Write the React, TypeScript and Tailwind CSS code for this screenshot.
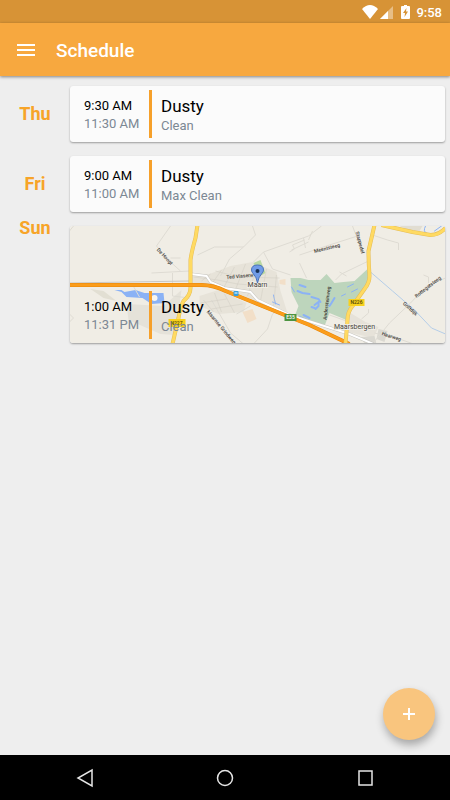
import type { ReactNode } from 'react';

type Visit = {
  day: string;
  start: string;
  end: string;
  name: string;
  task: string;
  map?: boolean;
};

const visits: Visit[] = [
  { day: 'Thu', start: '9:30 AM', end: '11:30 AM', name: 'Dusty', task: 'Clean' },
  { day: 'Fri', start: '9:00 AM', end: '11:00 AM', name: 'Dusty', task: 'Max Clean' },
  { day: 'Sun', start: '1:00 AM', end: '11:31 PM', name: 'Dusty', task: 'Clean', map: true },
];

const motorway = 'M0 59H132Q144 59 156 65L240 99L280 118';
const n227 = 'M128 -1L126 12Q122 26 121 34V62Q121 69 114 75Q111 80 109 92L103 118';
const n226 = 'M305 -1L299 25Q299 36 300 50Q300 57 295 63L283 80Q278 86 278 94L276 118';
const ringRoad = 'M312 -1L343 6L361 9Q370 9 377 1';

function StatusBar() {
  return (
    <div className="flex h-[23px] items-center justify-end bg-[#d79336] pr-2 text-white">
      <svg className="h-4 w-4" viewBox="0 0 16 16" fill="currentColor" aria-hidden="true">
        <path d="M0 5Q8 -3 16 5L8 15Z" />
      </svg>
      <svg className="ml-0.5 h-4 w-[13px]" viewBox="0 0 13 16" fill="currentColor" aria-hidden="true">
        <path d="M0 15L13 2V15Z" opacity="0.4" />
        <path d="M0 15L8 7V15Z" />
      </svg>
      <svg className="ml-2 h-4 w-[9px]" viewBox="0 0 9 16" aria-hidden="true">
        <path d="M3 1H6V2H8Q9 2 9 3V14Q9 15 8 15H1Q0 15 0 14V3Q0 2 1 2H3Z" fill="currentColor" />
        <path d="M5.500 4L2 9H4L3.500 13L7 7.500H5Z" fill="#d79336" />
      </svg>
      <span className="ml-1.5 pt-0.5 text-[13px] leading-4 font-medium">9:58</span>
    </div>
  );
}

function AppBar() {
  return (
    <header className="relative z-10 flex h-[53px] items-center bg-[#f7a83f] px-4 text-white shadow-[0_1px_3px_rgba(0,0,0,0.45)]">
      <button type="button" aria-label="Open menu" className="flex h-10 w-10 items-center">
        <svg className="h-5 w-5" viewBox="0 0 20 20" stroke="currentColor" strokeWidth="2" aria-hidden="true">
          <path d="M1 5H19M1 10H19M1 15H19" />
        </svg>
      </button>
      <h1 className="pt-0.5 text-[19px] leading-6 font-medium">Schedule</h1>
    </header>
  );
}

function AreaMap() {
  return (
    <svg
      className="absolute inset-0 h-full w-full"
      viewBox="0 0 376 117"
      preserveAspectRatio="xMidYMid slice"
      role="img"
      aria-label="Map of Maarn and Maarsbergen"
    >
      <rect width="376" height="117" fill="#f0ede5" />

      {/* Built-up and wooded areas */}
      <path d="M57 78L94 80L112 64L106 109L91 108L59 94Z" fill="#e5e2d9" />
      <path d="M21 63L34 65L47 75L34 72Z" fill="#e2dfd3" />
      <path d="M122 49L140 48L161 40L183 36L207 46L211 65L218 87L190 77L160 64L142 59H120Z" fill="#e7e3d9" />
      <path d="M130 70L149 64L177 77L174 86L149 88L130 80Z" fill="#e7e3d9" />
      <path d="M184 37L191 34L196 47L189 51Z" fill="#b9d8a1" />
      <path d="M173 86L183 83L187 93L178 97Z" fill="#f2dfc8" />
      <path d="M210 54L216 53V59L210 58Z" fill="#f2dfc8" />
      <path d="M281 87L296 96L309 101L304 112L278 106Z" fill="#e6e2d9" />
      <path d="M292 111L305 110L307 118H295ZM309 103L318 105L315 116L307 113Z" fill="#dad8d1" />
      <path d="M330 0H353L350 5L339 4Z" fill="#e1ddd2" />
      <path d="M221 52L231 52L239 54L251 54L257 48L265 57L274 56L285 55L298 43L300 57L280 85L277 94L260 87L255 100L230 91L226 88L229 80L222 66Z" fill="#bdd5bc" />

      {/* Water */}
      <path d="M45 64L52 64L55 66L66 64L75 67L94 67L95 77L82 78L73 72L57 71L52 66Z" fill="#8bb2f5" />
      <circle cx="85" cy="72" r="3" fill="#f7f5ef" />
      <g fill="none" stroke="#8bb2f5" strokeLinecap="round">
        <path d="M230 59L236 61M228 65L233 67L240 68M242 71L249 73L251 76M245 79L249 76V80L246 83M242 81L245 82M262 77L265 72M260 80L262 77M230 91L240 95M234 89L240 92" strokeWidth="2" />
        <path d="M222 61L225 66M278 61L284 58M272 70L276 68M282 66L288 63M204 69L206 78M203 76L210 79" strokeWidth="1" />
        <path d="M301 46L323 65L345 84L362 102L376 108" stroke="#b4cde8" strokeWidth="1" />
        <path d="M356 0Q353 6 357 7M365 5L372 0" strokeWidth="1" />
      </g>

      {/* Minor roads */}
      <g fill="none" stroke="#dedbd3">
        <path d="M101 0L87 20L101 36L111 45M82 47L120 45M101 32H111M0 5L4 0M0 88L4 92L0 96M103 47V70L120 72M62 57L70 71" />
        <path d="M128 29L145 21H174L186 9L183 0M174 21L160 33L151 50M184 36L194 26L239 10L252 0M194 26L203 43L221 49M222 24L239 16M220 26L225 23L223 19L235 14M234 12L236 22" />
        <path d="M230 29L260 19L288 10M239 14L243 5M230 37L237 52M266 54L272 48L299 35M270 46L277 50M303 9L318 14L329 17V24M292 93L299 87V83M303 118L320 97L341 77L357 60L376 52M354 49L359 51V57M283 0L286 8L294 26M305 107L330 113L344 118" />
        <path d="M142 74L161 107L174 118M184 118L198 103L203 88L210 83M167 88L181 80M260 89L277 95M254 105L276 118" />
      </g>
      <path d="M0 57L120 55" fill="none" stroke="#c9c7c2" />
      <g fill="none" stroke="#d2cec3" strokeWidth="1" opacity="0.5">
        <path d="M132 55L141 48M143 57L152 44M154 62L165 41M165 66L176 38M178 70L184 52M191 75L197 43M204 81L207 49M124 51L148 54L168 58L208 61M146 45L169 51L210 52M134 74L144 86M145 67L152 86M155 68L165 87M131 77L157 73M142 83L173 78" />
      </g>
      <path d="M121 48L137 50L141 56L155 62L181 66L188 74L220 89L280 108L304 118" fill="none" stroke="#c8c6c0" strokeWidth="3" />
      <path d="M121 48L137 50L141 56L155 62L181 66L188 74L220 89L280 108L304 118" fill="none" stroke="#ffffff" strokeWidth="2" />

      {/* Main roads, casing first */}
      <g fill="none" strokeLinejoin="round">
        <path d={n227} stroke="#e5bd58" strokeWidth="4" />
        <path d={n227} stroke="#ffda62" strokeWidth="3" />
        <path d={ringRoad} stroke="#e5bd58" strokeWidth="4" />
        <path d={ringRoad} stroke="#ffda62" strokeWidth="3" />
        <path d={motorway} stroke="#e7860a" strokeWidth="4" />
        <path d={motorway} stroke="#fb9d1b" strokeWidth="3" />
        <path d={n226} stroke="#e5bd58" strokeWidth="4" />
        <path d={n226} stroke="#ffda62" strokeWidth="3" />
      </g>

      {/* Road shields */}
      <rect x="99" y="93" width="17" height="8" fill="#f8d11d" />
      <rect x="279" y="73" width="16" height="7" fill="#f8d11d" />
      <rect x="215" y="88" width="12" height="7" fill="#4c9440" />
      <rect x="164" y="65" width="5" height="5" rx="1" fill="#35a1e0" />
      <path d="M165 67H168" stroke="#ffffff" />
      <g fontSize="5" textAnchor="middle" fill="#4e4308" fontWeight="500">
        <text x="107" y="99">N227</text>
        <text x="287" y="78">N226</text>
        <text x="221" y="93" fill="#ffffff">E35</text>
      </g>

      {/* Place and street names */}
      <g fill="#45423d" fontSize="5" fontWeight="500">
        <text transform="translate(87 24) rotate(47)">De Hoogt</text>
        <text transform="translate(157 53) rotate(-5)">Ted Visserw</text>
        <text transform="translate(137 86) rotate(50)">Maarnse Grindweg</text>
        <text transform="translate(245 27) rotate(-14)">Meentsteeg</text>
        <text transform="translate(286 6) rotate(75)">Stappedel</text>
        <text transform="translate(257 94) rotate(-83)">Andersteinweg</text>
        <text transform="translate(347 72) rotate(-38)">Rottegatsteeg</text>
        <text transform="translate(333 78) rotate(42)">Griftdijk</text>
        <text transform="translate(312 109) rotate(18)">Haarweg</text>
      </g>
      <g fill="#484641" fontSize="7" textAnchor="middle" stroke="#f0ede5" strokeWidth="2" paintOrder="stroke">
        <text x="188" y="61">Maarn</text>
        <text x="285" y="103">Maarsbergen</text>
      </g>

      <path d="M188 57Q187 51 184 48Q182 46 182 44Q182 39 188 39Q194 39 194 44Q194 46 192 48Q189 51 188 57Z" fill="#719ce8" stroke="#4b73ba" />
      <circle cx="188" cy="45" r="2" fill="#183258" />
    </svg>
  );
}

function VisitCard({ visit }: { visit: Visit }) {
  return (
    <article
      className={`relative flex flex-1 items-end overflow-hidden rounded-[3px] bg-[#fbfbfb] shadow-[0_1px_2px_rgba(0,0,0,0.35)] ${
        visit.map ? 'h-[117px]' : 'h-14'
      }`}
    >
      {visit.map && <AreaMap />}
      <div className="relative mb-1 flex h-12 flex-1 items-center pl-3.5">
        <div className="w-[65px] pt-0.5 text-[13px] leading-[18px] whitespace-nowrap">
          <p className="text-black">{visit.start}</p>
          <p className="text-[#7c8894]">{visit.end}</p>
        </div>
        <div className="h-12 w-[3px] bg-[#f6a02a]" />
        <div className="ml-[9px] pt-0.5">
          <h2 className="text-[17px] leading-[22px] text-black">{visit.name}</h2>
          <p className="text-[13px] leading-[18px] text-[#7c8894]">{visit.task}</p>
        </div>
      </div>
    </article>
  );
}

function NavButton({ label, children }: { label: string; children: ReactNode }) {
  return (
    <button type="button" aria-label={label} className="flex h-full w-[140px] items-center justify-center">
      <svg className="h-5 w-5" viewBox="0 0 20 20" fill="none" stroke="currentColor" strokeWidth="1.5" aria-hidden="true">
        {children}
      </svg>
    </button>
  );
}

export default function App() {
  return (
    <div className="flex min-h-screen flex-col bg-[#eeeeee] font-['Roboto',sans-serif]">
      <StatusBar />
      <AppBar />

      <main className="relative flex-1 pt-2.5">
        <ul className="space-y-3.5">
          {visits.map((visit) => (
            <li key={visit.day} className="flex pr-[5px]">
              <div
                className={`flex w-[70px] justify-center text-lg leading-5 font-bold text-[#f7a428] ${
                  visit.map ? '-mt-2 items-start' : 'items-center'
                }`}
              >
                {visit.day}
              </div>
              <VisitCard visit={visit} />
            </li>
          ))}
        </ul>

        <button
          type="button"
          aria-label="Add visit"
          className="absolute right-[15px] bottom-[15px] flex h-[52px] w-[52px] items-center justify-center rounded-full bg-[#f9c57e] text-white shadow-[1px_5px_8px_rgba(0,0,0,0.3)]"
        >
          <svg className="h-4 w-4" viewBox="0 0 16 16" stroke="currentColor" strokeWidth="2" aria-hidden="true">
            <path d="M8 2V14M2 8H14" />
          </svg>
        </button>
      </main>

      <nav aria-label="System" className="flex h-[45px] items-center justify-center bg-black text-[#e6e6e6]">
        <NavButton label="Back">
          <path d="M17 2V18L3 10Z" />
        </NavButton>
        <NavButton label="Home">
          <circle cx="10" cy="10" r="7.500" />
        </NavButton>
        <NavButton label="Recent apps">
          <rect x="4" y="3" width="13" height="14" />
        </NavButton>
      </nav>
    </div>
  );
}
